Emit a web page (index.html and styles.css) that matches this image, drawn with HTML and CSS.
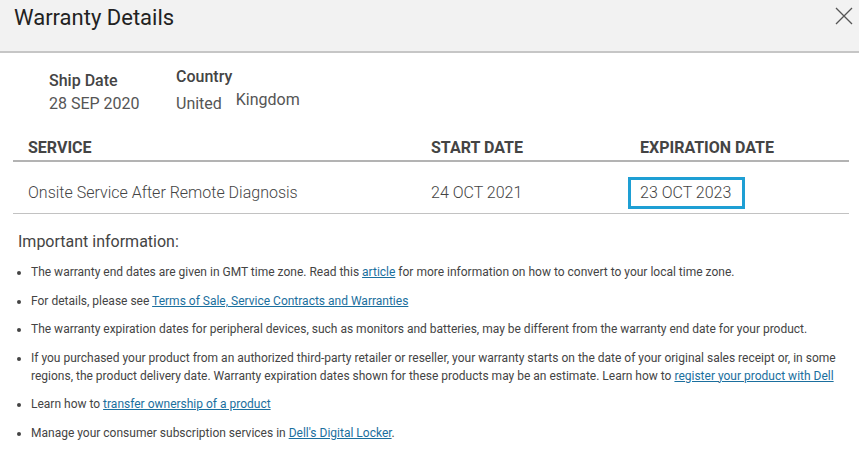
FILE: index.html
```html
<!DOCTYPE html>
<html lang="en">
<head>
    <meta charset="UTF-8">
    <meta name="viewport" content="width=device-width, initial-scale=1.0">
    <title>Warranty Details</title>
    <link rel="stylesheet" href="styles.css">
</head>
<body>
    <div class="modal-header">
        <h1>Warranty Details</h1>
        <button class="close-btn" aria-label="Close">
            <svg width="18" height="18" viewBox="0 0 18 18">
                <path d="M1 1 L17 17 M17 1 L1 17" stroke="#555" stroke-width="1.3" fill="none"/>
            </svg>
        </button>
    </div>

    <div class="summary">
        <div class="summary-item">
            <div class="summary-label">Ship Date</div>
            <div class="summary-value">28 SEP 2020</div>
        </div>
        <div class="summary-item country">
            <div class="summary-label">Country</div>
            <div class="summary-value">United <span class="country-rest">Kingdom</span></div>
        </div>
    </div>

    <div class="warranty-table">
        <div class="table-head">SERVICE</div>
        <div class="table-head">START DATE</div>
        <div class="table-head">EXPIRATION DATE</div>

        <div class="table-cell"><span class="cell-box">Onsite Service After Remote Diagnosis</span></div>
        <div class="table-cell"><span class="cell-box">24 OCT 2021</span></div>
        <div class="table-cell"><span class="cell-box highlight">23 OCT 2023</span></div>
    </div>

    <div class="important">
        <h3>Important information:</h3>
        <ul>
            <li>The warranty end dates are given in GMT time zone. Read this <a href="#">article</a> for more information on how to convert to your local time zone.</li>
            <li>For details, please see <a href="#">Terms of Sale, Service Contracts and Warranties</a></li>
            <li>The warranty expiration dates for peripheral devices, such as monitors and batteries, may be different from the warranty end date for your product.</li>
            <li>If you purchased your product from an authorized third-party retailer or reseller, your warranty starts on the date of your original sales receipt or, in some regions, the product delivery date. Warranty expiration dates shown for these products may be an estimate. Learn how to <a href="#">register your product with Dell</a></li>
            <li>Learn how to <a href="#">transfer ownership of a product</a></li>
            <li>Manage your consumer subscription services in <a href="#">Dell's Digital Locker</a>.</li>
        </ul>
    </div>
</body>
</html>
```

FILE: styles.css
```css
/* Warranty details modal */
body {
    font-family: Roboto, "Liberation Sans", sans-serif;
    background-color: #fff;
    color: #444;
    margin: 0;
    padding: 0;
}

.modal-header {
    display: flex;
    justify-content: space-between;
    align-items: flex-start;
    height: 51px;
    padding: 0 6px 0 14px;
    background-color: #f2f2f2;
    border-bottom: 2px solid #c6c6c6;
    box-sizing: content-box;
}

.modal-header h1 {
    margin: 0;
    padding-top: 5px;
    font-size: 22px;
    line-height: 26px;
    font-weight: 400;
    color: #222;
}

.close-btn {
    background: none;
    border: none;
    padding: 0;
    margin-top: 7px;
    cursor: pointer;
    line-height: 0;
}

.summary {
    display: flex;
    padding: 18px 0 0 49px;
}

.summary-item {
    width: 127px;
}

.summary-item.country {
    margin-top: -4px;
}

.summary-label {
    font-size: 16px;
    line-height: 20px;
    font-weight: 500;
    color: #444;
}

.summary-value {
    margin-top: 3px;
    font-size: 16px;
    line-height: 20px;
    color: #555;
}

.country .summary-value {
    margin-top: 3px;
}

.country-rest {
    margin-left: 10px;
    vertical-align: 4px;
}

.warranty-table {
    display: grid;
    grid-template-columns: 403px 209px 1fr;
    margin: 14px 10px 0 13px;
}

.table-head {
    padding: 10px 0 2px 15px;
    font-size: 16px;
    line-height: 20px;
    font-weight: 700;
    color: #444;
    border-bottom: 2px solid #b3b3b3;
}

.table-cell {
    padding: 15px 0 4px 3px;
    font-size: 16px;
    line-height: 20px;
    font-weight: 300;
    color: #444;
    border-bottom: 1px solid #c2c2c2;
}

.cell-box {
    display: inline-block;
    padding: 3px 9px;
    border: 3px solid transparent;
}

.cell-box.highlight {
    width: 93px;
    border-color: #1e9fd4;
}

.important {
    padding-left: 18px;
}

.important h3 {
    margin: 18px 0 0;
    font-size: 16px;
    line-height: 20px;
    font-weight: 400;
    color: #444;
}

.important ul {
    margin: 11px 0 0;
    padding: 0 20px 0 13px;
    font-size: 12px;
    line-height: 18px;
    color: #444;
}

.important li {
    margin-bottom: 10.5px;
}

.important a {
    color: #1b6f9e;
}
```
